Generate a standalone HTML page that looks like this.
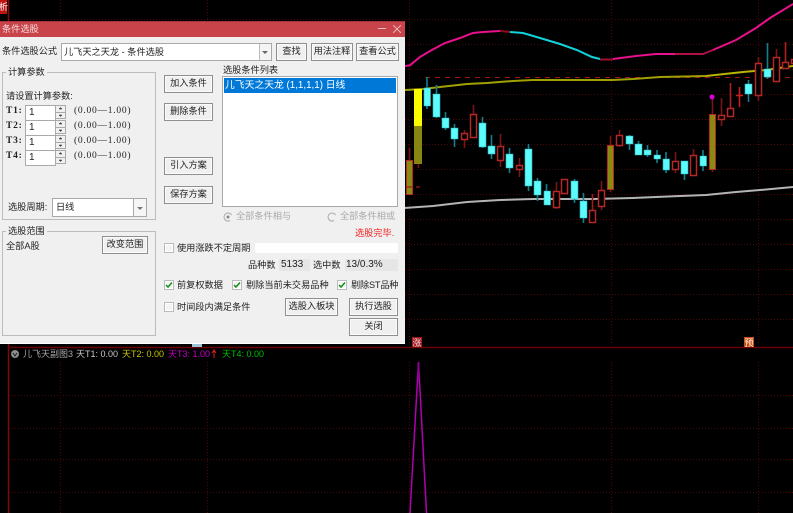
<!DOCTYPE html>
<html><head><meta charset="utf-8"><style>
html,body{margin:0;padding:0;background:#000}
#r{position:relative;width:793px;height:513px;overflow:hidden;background:#000;font-family:"Liberation Sans","Noto Sans CJK SC",sans-serif}
svg{position:absolute;left:0;top:0}
#d{position:absolute;left:0;top:21px;width:405px;height:322px;background:#f0f0f0;border-bottom:1px solid #fff;filter:blur(.3px)}
#d div{position:absolute;box-sizing:border-box}
#t{left:0;top:0;width:405px;height:16px;background:#c9434a;border-top:1px solid #a8353b}
.x{font-size:9.2px;line-height:12px;color:#222;white-space:nowrap}
.b{background:#f0f0f0;border:1px solid #8f8f8f;box-shadow:inset 0 0 0 1px #fbfbfb;font-size:9.2px;line-height:15px;text-align:center;color:#222;white-space:nowrap}
.g{border:1px solid #bcbcbc}
.l{background:#f0f0f0;font-size:9.2px;line-height:12px;padding:0 2px;color:#222;white-space:nowrap}
.i{background:#fff;border:1px solid #a9a9a9;font-size:10px;line-height:14px;padding-left:3px;color:#222}
.s{background:#f0f0f0;border:1px solid #aaa;width:11px;height:14px}
.n{font-family:"Liberation Serif",serif;font-size:9.5px;letter-spacing:.75px;line-height:12px;color:#222;white-space:nowrap}
.c{width:10px;height:10px;background:#f4f4f4;border:1px solid #bbb;box-shadow:inset 0 0 0 1px #fff}
.c svg{left:0;top:0}
.h{position:absolute;top:348px;font-size:9px;line-height:12px;white-space:nowrap}
</style></head><body><div id="r">
<svg width="793" height="513" viewBox="0 0 793 513">
<g stroke="#480606" stroke-width="1" stroke-dasharray="1 2" fill="none">
<path d="M9 19.5H793M9 44.5H793M9 69.5H793M9 94.5H793M9 119.5H793M9 144.5H793M9 169.5H793M9 194.5H793M9 219.5H793M9 244.5H793M9 269.5H793M9 294.5H793M9 319.5H793"/>
<path d="M9 395.5H793M9 428.5H793M9 459.5H793M9 492.5H793"/>
<path d="M60.5 0V345M207.5 0V345M409.5 0V345M611.5 0V345M758.5 0V345"/>
<path d="M60.5 362V513M207.5 362V513M409.5 362V513M611.5 362V513M758.5 362V513"/>
</g>
<path d="M8.5 0V513" stroke="#7c0a0a" stroke-width="1.5"/>
<path d="M8 347.5H793" stroke="#6a0000" stroke-width="1.6"/>
<rect x="0" y="0" width="7" height="14" fill="#c01410"/>
<text x="-1" y="10" font-size="9" fill="#fff" font-family="Liberation Sans,Noto Sans CJK SC,sans-serif">析</text>
<path d="M425 77.5H793" stroke="#a01414" stroke-dasharray="5 5" fill="none"/>
<g fill="none" stroke-width="2">
<path d="M405 66 410 65.3 420 57 430 51 445 43 460 38 473 33 483 32 500 31" stroke="#e8108c"/>
<path d="M500 31 510 32" stroke="#8c0c20"/>
<path d="M510 32 523 33 540 38 560 44 577 50 592 57 600 59" stroke="#10d4dc"/>
<path d="M600 59.500 613 59.500" stroke="#a01030"/>
<path d="M613 59 636 56 656 54 675 54" stroke="#e8108c"/>
<path d="M675 54 703 54 713 50" stroke="#b01048"/>
<path d="M713 50 736 40 756 28 770 18 793 4" stroke="#e8108c"/>
<path d="M405 90 423 89 440 87 467 84 487 83 513 81 533 80 613 80 633 79 660 77 706 76" stroke="#a0a000"/>
<path d="M706 76 743 72 766 70 793 66" stroke="#b8b400"/>
<path d="M404 208 433 206 467 202 500 200 533 199 593 199 633 198 680 196 706 195 736 192 760 190 793 187" stroke="#b4b4b4"/>
</g>
<g stroke="#7c1416" fill="none" stroke-width="1.6">
<path d="M409.500 148V194M418.500 164V168M473.500 105V114M464.500 130V148M500.500 134V167M519.500 158V177M556.500 182V209M601.500 181V210M610.500 136V192M619.500 130V147M675.500 152V173M693.500 149V155M712.500 99V172M721.500 98V126M758.500 57V101M776.500 49V81"/>
<path d="M730.500 83V108M785.500 42V62" stroke="#b02020"/>
<path d="M739.500 87V107" stroke="#c82020"/>
<path d="M592.500 194V210" stroke="#a01c1c"/>
</g>
<g stroke="#12808c" fill="none" stroke-width="1.6">
<path d="M427 77V109M436.500 85V118M445.500 112V130M454.500 124V147M482.500 117V148M491.500 135V159M509.500 148V173M528.500 144V191M537.500 178V201M546.500 184V205M574.500 179V203M583.500 193V223M629.500 135V150M638.500 141V155M647.500 145V157M657 150V163M666 152V173M684.500 161V180M703 150V171M748.500 80V102M767.500 43V79"/>
</g>
<path fill="#5cfcfc" stroke="#2cb0bc" stroke-width=".6" d="M424 88h6.500v18H424zM433 94h7v23h-7zM442 118h7v10h-7zM451 128h7v11h-7zM479 123h7v24h-7zM488 146h7v8h-7zM506 154h7v14h-7zM525 149h7v37h-7zM534 181h7v14h-7zM544 191h6.500v14H544zM571 181h7v18h-7zM580 201h7v17h-7zM626 136h7v8h-7zM635 144h7v11h-7zM644 150h7v5h-7zM654 155h6.500v4H654zM663 159h6.500v11H663zM681 161h7v13h-7zM700 156h6.500v10H700zM745 84h7v10h-7zM764 69h7v8h-7z"/>
<path fill="#000" stroke="#b42828" stroke-width="1.500" d="M461.500 133.500h6v6h-6zM470.500 114.500h6v23h-6zM497.500 146.500h6v14h-6zM516.500 165.500h6v4h-6zM553.500 191.500h6v16h-6zM561.500 179.500h6v14h-6zM589.500 210.500h6v12h-6zM598.500 190.500h6v16h-6zM616.500 135.500h6v10h-6zM672.500 161.500h6v8h-6zM690.500 155.500h6v20h-6zM718.500 115.500h6v4h-6zM727.500 108.500h6v8h-6zM755.500 63.500h6v32h-6zM773.500 57.500h6v24h-6zM782.500 62.500h6v6h-6zM791.500 59.500h3v4h-3z"/>
<path d="M736 95.500H743" stroke="#c82020" stroke-width="1.500"/>
<rect x="406.500" y="160.500" width="6" height="34" fill="#8a8a10" stroke="#b42828"/>
<rect x="607.500" y="145.500" width="6" height="44" fill="#8a8a10" stroke="#b42828"/>
<rect x="709.500" y="114.500" width="6" height="55" fill="#8a8a10" stroke="#b42828"/>
<rect x="414" y="89" width="8" height="37" fill="#fcfc00"/>
<rect x="414" y="126" width="8" height="38" fill="#868610"/>
<path d="M416 187H420M406 187H412" stroke="#a01818" stroke-width="1.300"/>
<circle cx="712" cy="97" r="2.500" fill="#d800d8"/>
<g fill="none">
<path d="M418.500 362 410 513M418.500 362 426.500 513" stroke="#b000b0" stroke-width="1.500"/>
<path d="M418.500 362V380" stroke="#900090" stroke-width="2"/>
</g>
<rect x="412" y="337" width="10" height="10" fill="#a01820"/>
<text x="412.500" y="346" font-size="9" fill="#f4d8d8" font-family="Liberation Sans,Noto Sans CJK SC,sans-serif">涨</text>
<rect x="744" y="337" width="10" height="10" fill="#c8501c"/>
<text x="744.500" y="346" font-size="9" fill="#fff0d8" font-family="Liberation Sans,Noto Sans CJK SC,sans-serif">预</text>
<rect x="192" y="344" width="10" height="3" fill="#9cc4d8"/>
<circle cx="15" cy="354" r="4" fill="#8c8c8c"/>
<path d="M13 353 15 356 17 353" stroke="#222" fill="none"/>
<path d="M214 358V351M212 353 214 350 216 353" stroke="#e02020" fill="none"/>
</svg>
<div class="h" style="left:23px;color:#a8a8a8;font-size:9px">儿飞天副图3</div>
<div class="h" style="left:76px;color:#c8c8c8">天T1: 0.00</div>
<div class="h" style="left:122px;color:#c8c800">天T2: 0.00</div>
<div class="h" style="left:168px;color:#c800c8">天T3: 1.00</div>
<div class="h" style="left:222px;color:#00c000">天T4: 0.00</div>

<div id="d">
<div id="t"></div>
<div class="x" style="left:2px;top:2px;color:#f4dcdc">条件选股</div>
<div style="left:378px;top:7px;width:8px;height:1px;background:#eab8b8"></div>
<svg style="left:393px;top:4px" width="8" height="8"><path d="M0 0 8 8M8 0 0 8" stroke="#eab8b8" fill="none"/></svg>

<div class="x" style="left:2px;top:24px">条件选股公式</div>
<div class="i" style="left:61px;top:22px;width:211px;height:18px;font-size:9.200px;line-height:16px;padding-left:2px">儿飞天之天龙 - 条件选股</div>
<div style="left:259px;top:23px;width:12px;height:16px;background:#f4f4f4;border-left:1px solid #bbb"></div>
<svg style="left:262px;top:30px" width="7" height="4"><path d="M0 0H6L3 3z" fill="#666"/></svg>
<div class="b" style="left:276px;top:22px;width:31px;height:18px">查找</div>
<div class="b" style="left:311px;top:22px;width:42px;height:18px">用法注释</div>
<div class="b" style="left:356px;top:22px;width:43px;height:18px">查看公式</div>

<div class="g" style="left:2px;top:51px;width:154px;height:148px"></div>
<div class="l" style="left:6px;top:45px">计算参数</div>
<div class="x" style="left:6px;top:69px">请设置计算参数:</div>

<div class="n" style="left:6px;top:84px;font-weight:bold">T1:</div>
<div class="i" style="left:25px;top:84px;width:31px;height:16px">1</div>
<div class="s" style="left:55px;top:84px"></div>
<div class="n" style="left:74px;top:84px">(0.00—1.00)</div>
<div class="n" style="left:6px;top:99px;font-weight:bold">T2:</div>
<div class="i" style="left:25px;top:99px;width:31px;height:16px">1</div>
<div class="s" style="left:55px;top:99px"></div>
<div class="n" style="left:74px;top:99px">(0.00—1.00)</div>
<div class="n" style="left:6px;top:114px;font-weight:bold">T3:</div>
<div class="i" style="left:25px;top:114px;width:31px;height:16px">1</div>
<div class="s" style="left:55px;top:114px"></div>
<div class="n" style="left:74px;top:114px">(0.00—1.00)</div>
<div class="n" style="left:6px;top:129px;font-weight:bold">T4:</div>
<div class="i" style="left:25px;top:129px;width:31px;height:16px">1</div>
<div class="s" style="left:55px;top:129px"></div>
<div class="n" style="left:74px;top:129px">(0.00—1.00)</div>
<svg style="left:55px;top:84px" width="12" height="60"><path d="M1 7.500H10M1 22.500H10M1 37.500H10M1 52.500H10" stroke="#aaa"/><path d="M4 4H7L5.500 2.500zM4 10H7L5.500 11.500zM4 19H7L5.500 17.500zM4 25H7L5.500 26.500zM4 34H7L5.500 32.500zM4 40H7L5.500 41.500zM4 49H7L5.500 47.500zM4 55H7L5.500 56.500z" fill="#333" stroke="#333" stroke-width=".5"/></svg>

<div class="x" style="left:8px;top:180px">选股周期:</div>
<div class="i" style="left:52px;top:177px;width:95px;height:19px;font-size:9.200px;line-height:17px">日线</div>
<div style="left:133px;top:178px;width:13px;height:17px;background:#f6f6f6;border-left:1px solid #aaa"></div>
<svg style="left:137px;top:186px" width="7" height="4"><path d="M0 0H6L3 3z" fill="#777"/></svg>

<div class="g" style="left:2px;top:210px;width:154px;height:105px"></div>
<div class="l" style="left:6px;top:204px">选股范围</div>
<div class="x" style="left:6px;top:219px">全部A股</div>
<div class="b" style="left:102px;top:215px;width:46px;height:18px">改变范围</div>

<div class="b" style="left:164px;top:54px;width:49px;height:18px">加入条件</div>
<div class="b" style="left:164px;top:82px;width:49px;height:18px">删除条件</div>
<div class="b" style="left:164px;top:136px;width:49px;height:18px">引入方案</div>
<div class="b" style="left:164px;top:165px;width:49px;height:18px">保存方案</div>

<div class="x" style="left:223px;top:43px">选股条件列表</div>
<div style="left:222px;top:55px;width:176px;height:131px;background:#fff;border:1px solid #a8a8a8"></div>
<div style="left:224px;top:57px;width:172px;height:15px;background:#0078d7;color:#fff;font-size:9.800px;line-height:15px;padding-left:1px;white-space:nowrap">儿飞天之天龙 (1,1,1,1) 日线</div>

<svg style="left:222px;top:190px" width="12" height="12"><circle cx="6" cy="6" r="4" fill="#f0f0f0" stroke="#aaa" stroke-dasharray="14 6" transform="rotate(130 6 6)"/><circle cx="6" cy="6" r="1.500" fill="#888"/></svg>
<div class="x" style="left:236px;top:189px;color:#aaa">全部条件相与</div>
<svg style="left:326px;top:190px" width="12" height="12"><circle cx="6" cy="6" r="4" fill="#f0f0f0" stroke="#aaa" stroke-dasharray="14 6" transform="rotate(130 6 6)"/></svg>
<div class="x" style="left:340px;top:189px;color:#aaa">全部条件相或</div>
<div class="x" style="left:355px;top:206px;color:#f02020">选股完毕.</div>

<div class="c" style="left:164px;top:222px"></div>
<div class="x" style="left:177px;top:221px">使用涨跌不定周期</div>
<div style="left:255px;top:222px;width:143px;height:10px;background:#fff"></div>
<div class="x" style="left:248px;top:238px">品种数</div>
<div class="x" style="left:279px;top:238px;width:31px;height:12px;background:#e6e6e6;padding-left:2px;font-size:10px">5133</div>
<div class="x" style="left:313px;top:238px">选中数</div>
<div class="x" style="left:345px;top:238px;width:53px;height:12px;background:#e6e6e6;padding-left:1px;font-size:10px">13/0.3%</div>

<div class="c" style="left:164px;top:259px"><svg width="8" height="8"><path d="M1 4 3 6 7 1.500" stroke="#109010" stroke-width="1.500" fill="none"/></svg></div>
<div class="x" style="left:177px;top:258px">前复权数据</div>
<div class="c" style="left:232px;top:259px"><svg width="8" height="8"><path d="M1 4 3 6 7 1.500" stroke="#109010" stroke-width="1.500" fill="none"/></svg></div>
<div class="x" style="left:246px;top:258px">剔除当前未交易品种</div>
<div class="c" style="left:337px;top:259px"><svg width="8" height="8"><path d="M1 4 3 6 7 1.500" stroke="#109010" stroke-width="1.500" fill="none"/></svg></div>
<div class="x" style="left:351px;top:258px;letter-spacing:-.2px">剔除ST品种</div>

<div class="c" style="left:164px;top:281px"></div>
<div class="x" style="left:177px;top:280px">时间段内满足条件</div>
<div class="b" style="left:285px;top:277px;width:53px;height:18px">选股入板块</div>
<div class="b" style="left:349px;top:277px;width:49px;height:18px">执行选股</div>
<div class="b" style="left:349px;top:297px;width:49px;height:18px">关闭</div>
</div>
</div></body></html>
